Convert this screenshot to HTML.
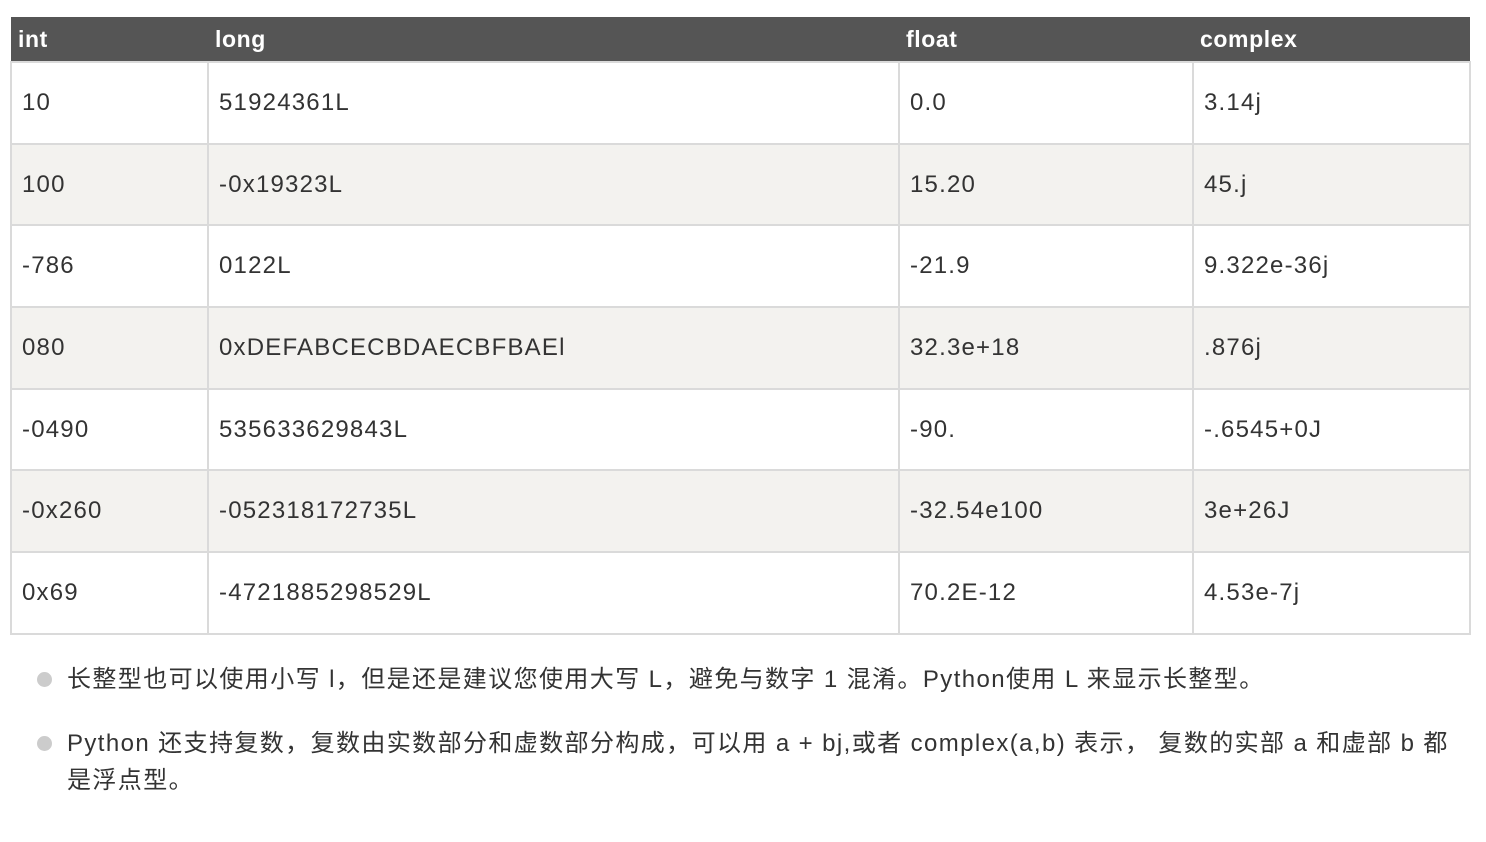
<!DOCTYPE html>
<html><head><meta charset="utf-8"><style>
body{margin:0;width:1486px;height:842px;background:#fff;font-family:"Liberation Sans","Noto Sans CJK SC",sans-serif;color:#333;position:relative;overflow:hidden}
table{position:absolute;left:10px;top:17px;border-collapse:collapse;table-layout:fixed;width:1459px}
th{background:#555;color:#fff;font-weight:bold;font-size:23px;letter-spacing:0.6px;text-align:left;height:44px;padding:0 0 0 7px;border:none;vertical-align:middle}
td{border:2px solid #dadada;height:79.7px;font-size:24px;letter-spacing:1.2px;padding:0 0 0 10px;vertical-align:middle}
tr:nth-child(odd) td{background:#f3f2ef}
.b{position:absolute;left:67px;font-size:24px;letter-spacing:1.4px;line-height:37px;width:1395px}
.b:before{content:"";position:absolute;left:-30px;top:11px;width:15px;height:15px;border-radius:50%;background:#ccc}
</style></head><body>
<table>
<colgroup><col style="width:197px"><col style="width:691px"><col style="width:294px"><col style="width:277px"></colgroup>
<tr><th>int</th><th>long</th><th>float</th><th>complex</th></tr>
<tr><td>10</td><td>51924361L</td><td>0.0</td><td>3.14j</td></tr>
<tr><td>100</td><td>-0x19323L</td><td>15.20</td><td>45.j</td></tr>
<tr><td>-786</td><td>0122L</td><td>-21.9</td><td>9.322e-36j</td></tr>
<tr><td>080</td><td>0xDEFABCECBDAECBFBAEl</td><td>32.3e+18</td><td>.876j</td></tr>
<tr><td>-0490</td><td>535633629843L</td><td>-90.</td><td>-.6545+0J</td></tr>
<tr><td>-0x260</td><td>-052318172735L</td><td>-32.54e100</td><td>3e+26J</td></tr>
<tr><td>0x69</td><td>-4721885298529L</td><td>70.2E-12</td><td>4.53e-7j</td></tr>
</table>
<div class="b" style="top:661px">长整型也可以使用小写 l，但是还是建议您使用大写 L，避免与数字 1 混淆。Python使用 L 来显示长整型。</div>
<div class="b" style="top:725px">Python 还支持复数，复数由实数部分和虚数部分构成，可以用 a + bj,或者 complex(a,b) 表示， 复数的实部 a 和虚部 b 都<br>是浮点型。</div>
</body></html>
